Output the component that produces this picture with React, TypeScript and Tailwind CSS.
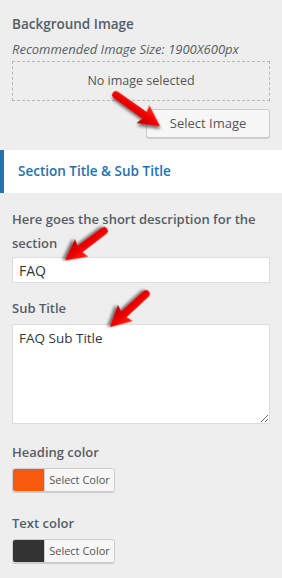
import React from 'react';

const Arrow = ({ x, y, angle, len }: { x: number; y: number; angle: number; len: number }) => {
    const L = len;
    const d = `M0,-3.8 L${L - 19},-4 L${L - 21},-11 L${L},0 L${L - 21},11 L${L - 19},4 L0,3.8 A3.8,3.8 0 0 1 0,-3.8 Z`;
    return (
        <g transform={`translate(${x},${y}) rotate(${angle})`}>
            <path d={d} fill="url(#redGrad)" filter="url(#arrowShadow)" />
        </g>
    );
};

const ColorPicker = ({ color }: { color: string }) => (
    <div className="flex h-[24px] w-[103px] rounded-[3px] border border-[#cccccc] shadow-[0_1px_0_#cccccc] overflow-hidden">
        <span className="w-[31px] h-full" style={{ backgroundColor: color }}></span>
        <span className="flex-1 bg-[#f7f7f7] border-l border-[#cccccc] text-[11px] text-[#555555] flex items-center justify-center">
            Select Color
        </span>
    </div>
);

export default function App() {
    return (
        <div className="relative w-[282px] h-[578px] overflow-hidden bg-[#eeeeee] font-['Open_Sans',sans-serif] text-[#555d66]">
            <div className="px-3 pt-[14px]">
                <h3 className="text-[13.5px] font-semibold leading-[20px]">Background Image</h3>
                <p className="mt-[5px] text-[13px] italic leading-[20px]">Recommended Image Size: 1900X600px</p>
                <div className="mt-[2px] h-[40px] border border-dashed border-[#b4b9be] flex items-center justify-center text-[12.5px] text-[#555555]">
                    No image selected
                </div>
                <div className="flex justify-end mt-[8px]">
                    <button className="w-[124px] h-[29px] rounded-[3px] border border-[#cccccc] bg-[#f7f7f7] shadow-[0_1px_0_#cccccc] text-[13px] text-[#555555]">
                        Select Image
                    </button>
                </div>
            </div>

            <div className="mt-[12px] h-[43px] bg-white border-l-4 border-[#2271b1] flex items-center pl-[14px]">
                <span className="text-[13.5px] font-semibold text-[#2271b1]">Section Title &amp; Sub Title</span>
            </div>

            <div className="px-3 pt-[14px]">
                <label className="block text-[13px] font-semibold leading-[24px]">
                    Here goes the short description for the section
                </label>
                <input
                    className="mt-[2px] block w-full h-[26px] px-[6px] bg-white border border-[#dddddd] text-[14px] text-[#32373c] outline-none"
                    type="text"
                    defaultValue="FAQ"
                />
                <label className="block mt-[15px] text-[13px] font-semibold leading-[20px]">Sub Title</label>
                <textarea
                    className="mt-[6px] block w-full h-[100px] px-[6px] py-[3px] bg-white border border-[#dddddd] text-[13.5px] leading-[20px] text-[#32373c] outline-none"
                    defaultValue="FAQ Sub Title"
                />
                <label className="block mt-[18px] text-[13px] font-semibold leading-[20px]">Heading color</label>
                <div className="mt-[6px]">
                    <ColorPicker color="#f95a0e" />
                </div>
                <label className="block mt-[21px] text-[13px] font-semibold leading-[20px]">Text color</label>
                <div className="mt-[6px]">
                    <ColorPicker color="#333333" />
                </div>
            </div>

            <svg className="absolute inset-0 pointer-events-none" width="282" height="578" viewBox="0 0 282 578">
                <defs>
                    <linearGradient id="redGrad" x1="0" y1="0" x2="0" y2="1">
                        <stop offset="0" stopColor="#ff2a1a" />
                        <stop offset="0.5" stopColor="#ee0000" />
                        <stop offset="1" stopColor="#b30000" />
                    </linearGradient>
                    <filter id="arrowShadow" x="-30%" y="-30%" width="160%" height="160%">
                        <feDropShadow dx="2" dy="2" stdDeviation="1.5" floodColor="#000" floodOpacity="0.55" />
                    </filter>
                </defs>
                <Arrow x={116} y={95} angle={35.4} len={54} />
                <Arrow x={104} y={231} angle={143} len={49} />
                <Arrow x={146} y={294} angle={137.5} len={49} />
            </svg>
        </div>
    );
}
